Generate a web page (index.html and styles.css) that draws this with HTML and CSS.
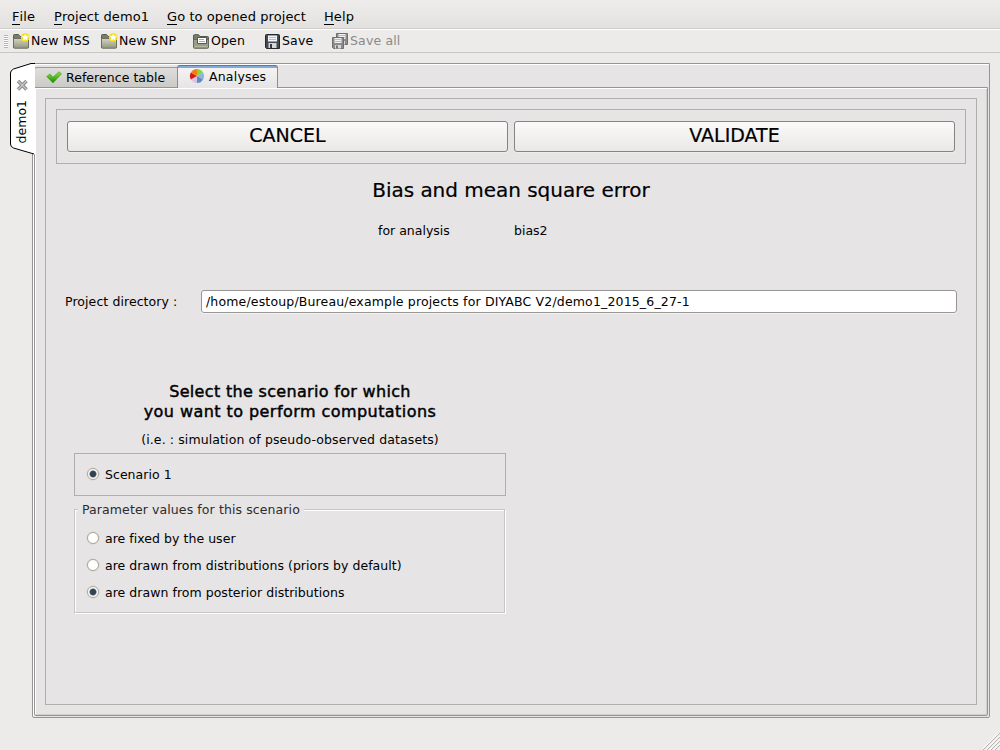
FILE: index.html
```html
<!DOCTYPE html>
<html lang="en">
<head>
<meta charset="utf-8">
<title>DIYABC</title>
<link rel="stylesheet" href="styles.css">
</head>
<body>
<svg class="defs" width="0" height="0">
  <defs>
    <linearGradient id="folder" x1="0" y1="0" x2="0" y2="1"><stop offset="0" stop-color="#d2d4bd"/><stop offset="1" stop-color="#94977f"/></linearGradient>
    <linearGradient id="check" x1="0" y1="0" x2="0" y2="1"><stop offset="0" stop-color="#8be33a"/><stop offset="1" stop-color="#178a08"/></linearGradient>
    <symbol id="new" viewBox="0 0 17 16">
      <path d="M.5 14.500V2.500q0-1 1-1h4l1.500 2h7.500q1 0 1 1v10z" fill="#7b7e69" stroke="#595b4c"/>
      <path d="M.5 5.500h15v9q0 .7-1 .7H1.500q-1 0-1-.7z" fill="url(#folder)" stroke="#6d705d"/>
      <circle cx="12.200" cy="4.300" r="4.300" fill="#f6e21c"/>
      <path d="M12.200.8l1.100 2.300 2.500.2-1.900 1.700.7 2.500-2.400-1.300-2.200 1.300.6-2.500-1.900-1.700 2.500-.2z" fill="#fff"/>
    </symbol>
    <symbol id="open" viewBox="0 0 17 16">
      <path d="M.5 13.500V2.500q0-.8 1-.8h4l1.500 1.800h7.500q1 0 1 1v9z" fill="#7a7d68" stroke="#55574a"/>
      <path d="M.5 6.500h15v8q0 .8-1 .8H1.500q-1 0-1-.8z" fill="#9c9f88" stroke="#666956"/>
      <path d="M4.500 4.500h9v6h-9z" fill="#fff" stroke="#555"/>
      <path d="M6 6.500h5M6 8.500h6" stroke="#aaa"/>
      <path d="M1.500 13.500h13" stroke="#b5b8a1"/>
    </symbol>
    <symbol id="floppy" viewBox="0 0 15 15">
      <path d="M.5 1.500q0-1 1-1h12q1 0 1 1v13H1.500l-1-1z" fill="#454951" stroke="#25282e"/>
      <path d="M3 1h9v6.500H3z" fill="#f3f8fc"/>
      <path d="M3 1.500h9" stroke="#75a8d2"/>
      <path d="M4 3.500h7M4 5.500h7" stroke="#a9bccb"/>
      <path d="M3.500 9h8v5h-8z" fill="#d5d7d9"/>
      <path d="M5 10h2v4H5z" fill="#343840"/>
    </symbol>
    <symbol id="floppy-off" viewBox="0 0 12 12">
      <path d="M.5.500h11v11H1.500l-1-1z" fill="#8b8b8b" stroke="#6f6f6f"/>
      <path d="M2.500 1h7v5h-7z" fill="#f1f1f1"/>
      <path d="M3 2.500h6M3 4.500h6" stroke="#bbb"/>
      <path d="M3 8h6v3.500H3z" fill="#d8d8d8"/>
      <path d="M4 8.500h2v3H4z" fill="#777"/>
    </symbol>
  </defs>
</svg>

<nav class="menubar">
  <span class="menu file"><u>F</u>ile</span>
  <span class="menu project"><u>P</u>roject demo1</span>
  <span class="menu goto"><u>G</u>o to opened project</span>
  <span class="menu help"><u>H</u>elp</span>
</nav>

<div class="toolbar">
  <i class="handle"></i>
  <span class="tool mss"><svg class="icon"><use href="#new"/></svg>New MSS</span>
  <span class="tool snp"><svg class="icon"><use href="#new"/></svg>New SNP</span>
  <span class="tool open"><svg class="icon"><use href="#open"/></svg>Open</span>
  <span class="tool save"><svg class="disk"><use href="#floppy"/></svg>Save</span>
  <span class="tool all"><svg class="disks" viewBox="0 0 17 16"><use href="#floppy-off" x="4" y="0" width="12" height="12"/><use href="#floppy-off" x="0" y="4" width="12" height="12"/></svg>Save all</span>
</div>

<main class="workspace">
  <div class="side-tab">
    <svg class="side-shape" viewBox="0 0 25 92">
      <path d="M25 .5H21L3.500 6Q.5 7.500.5 10V81Q.5 84 3.500 85L25 91.500z" fill="#fff"/>
      <path d="M25 .5H21L3.500 6Q.5 7.500.5 10V81Q.5 84 3.500 85L24 91" fill="none" stroke="#000"/>
      <path d="M8 18l8.500 8.500M16.500 18L8 26.500" stroke="#8a8a8a" stroke-width="3.400"/>
      <path d="M8 18l8.500 8.500M16.500 18L8 26.500" stroke="#c6c6c6" stroke-width="1.300"/>
    </svg>
    <span class="side-label">demo1</span>
  </div>

  <section class="project-pane">
    <div class="tabs">
      <div class="tab reference">
        <svg class="tick" viewBox="0 0 16 13"><path d="M.7 5.500L4 3l3 3.200L13 .8l2.500 2L7 12z" fill="url(#check)" stroke="#3d9b20" stroke-width=".6"/></svg>
        <span>Reference table</span>
      </div>
      <div class="tab active">
        <svg class="wheel" viewBox="0 0 16 16">
          <path d="M8 8L8 1A7 7 0 0 1 14.100 4.500z" fill="#86d63c"/>
          <path d="M8 8L14.100 4.500A7 7 0 0 1 14.100 11.500z" fill="#8fb5dc"/>
          <path d="M8 8L14.100 11.500A7 7 0 0 1 8 15z" fill="#5b8fc9"/>
          <path d="M8 8L8 15A7 7 0 0 1 1.900 11.500z" fill="#dcc3de"/>
          <path d="M8 8L1.900 11.500A7 7 0 0 1 1.900 4.500z" fill="#d51c1c"/>
          <path d="M8 8L1.900 4.500A7 7 0 0 1 8 1z" fill="#f57d0c"/>
        </svg>
        <span>Analyses</span>
      </div>
    </div>

    <div class="page">
      <div class="frame">
        <div class="actions">
          <button class="action">CANCEL</button>
          <button class="action">VALIDATE</button>
        </div>
        <h1 class="title">Bias and mean square error</h1>
        <div class="analysis"><span class="for">for analysis</span><span class="name">bias2</span></div>
        <label class="directory"><span class="dir-label">Project directory :</span><input class="path" value="/home/estoup/Bureau/example projects for DIYABC V2/demo1_2015_6_27-1"></label>

        <div class="scenario">
          <h2 class="heading"><span class="line1">Select the scenario for which</span><br><span class="line2">you want to perform computations</span></h2>
          <p class="hint">(i.e. : simulation of pseudo-observed datasets)</p>
          <div class="choices"><div class="option"><i class="radio on"></i><span>Scenario 1</span></div></div>
          <div class="group">
            <div class="legend">Parameter values for this scenario</div>
            <div class="option"><i class="radio"></i><span>are fixed by the user</span></div>
            <div class="option"><i class="radio"></i><span>are drawn from distributions (priors by default)</span></div>
            <div class="option"><i class="radio on"></i><span>are drawn from posterior distributions</span></div>
          </div>
        </div>
      </div>
    </div>
  </section>
</main>
<svg class="grip" viewBox="0 0 17 17"><path d="M0 17L17 0M4 17L17 4M8 17L17 8M12 17L17 12" stroke="#b4b3b2"/><path d="M-1.500 17L17-1.500M2.500 17L17 2.500M6.500 17L17 6.500M10.500 17L17 10.500" stroke="#fff"/></svg>
</body>
</html>
```

FILE: styles.css
```css
* { box-sizing: border-box; }
body { margin: 0; width: 1000px; height: 750px; overflow: hidden; display: flex; flex-direction: column; background: #ecebea; color: #000; font: 13px/16px "DejaVu Sans", sans-serif; }
.defs { position: absolute; }

.menubar { height: 30px; flex: none; display: flex; padding: 9px 0 0 12px; background: linear-gradient(#eeedec, #e2e1df); border-bottom: 1px solid #fff; box-shadow: inset 0 -1px #cdccca; letter-spacing: .08px; }
.menu { white-space: nowrap; }
.menu u { text-decoration: none; display: inline-block; height: 16px; border-bottom: 1px solid #000; }
.file { width: 42px; }
.project { width: 113px; }
.goto { width: 157px; }

.toolbar { height: 23px; flex: none; display: flex; padding-left: 4px; border-bottom: 1px solid #c8c7c5; }
.handle { width: 4px; height: 13px; margin: 5px 5px 0 0; background: repeating-linear-gradient(#b5b4b2 0 1px, #fff 1px 2px); }
.tool { display: flex; height: 22px; line-height: 22px; white-space: nowrap; font-size: 12.5px; letter-spacing: .15px; }
.icon { width: 17px; height: 16px; margin: 3px 1px 0 0; }
.disk { width: 15px; height: 15px; margin: 4px 2px 0 0; }
.disks { width: 17px; height: 16px; margin: 3px 1px 0 0; }
.mss { width: 88px; }
.snp { width: 92px; }
.open { width: 72px; }
.save { width: 67px; }
.all { color: #8b8a89; }

.workspace { flex: none; display: flex; padding: 10px 10px 0 10px; }
.side-tab { position: relative; z-index: 1; width: 24px; height: 92px; flex: none; margin-right: -2px; }
.side-shape { display: block; width: 25px; height: 92px; }
.side-label { position: absolute; left: 4px; bottom: 12px; writing-mode: vertical-rl; transform: rotate(180deg); font-size: 12.5px; line-height: 16px; }

.project-pane { width: 958px; height: 655px; border: 1px solid #969594; border-radius: 0 0 2px 2px; background: #e6e4e5; box-shadow: inset 1px 1px #fff; padding: 1px; display: flex; flex-direction: column; }
.tabs { height: 22px; flex: none; display: flex; }
.tab { display: flex; white-space: nowrap; font-size: 12.5px; letter-spacing: .05px; }
.reference { width: 144px; height: 20px; margin-top: 2px; padding: 2px 0 0 11px; border: 1px solid #9b9a99; border-bottom: 0; border-radius: 3px 0 0 0; background: linear-gradient(#dfdedc, #cbcac6); }
.tick { width: 16px; height: 13px; margin: 1px 4px 0 0; }
.active { position: relative; width: 101px; height: 23px; padding: 3px 0 0 11px; margin-left: -1px; border: 1px solid #8c8c8c; border-top: 1px solid #5479a6; border-bottom: 0; border-radius: 3px 3px 0 0; background: linear-gradient(#84abd8 0 2px, #f4f3f2 2px, #e6e4e5); letter-spacing: .2px; }
.wheel { width: 16px; height: 16px; margin: -1px 4px 0 0; }
.page { flex: 1; padding: 10px; border: 1px solid #969594; border-radius: 0 0 2px 2px; box-shadow: inset 1px 1px #fff, inset -1px -1px #d1cfcc; }
.frame { height: 607px; width: 932px; padding: 10px; border: 1px solid #b0aeaf; }

.actions { height: 55px; display: flex; gap: 6px; padding: 11px 10px; border: 1px solid #b0aeaf; }
.action { flex: 1; height: 31px; padding: 0 0 2px; border: 1px solid #858483; border-radius: 3px; background: linear-gradient(#fbfaf8, #e9e8e6); box-shadow: 0 1px #efeeed; font: 19px/27px "DejaVu Sans", sans-serif; color: #000; -webkit-text-stroke: .2px #000; }
.title { margin: 13px 0 0; font-size: 20px; line-height: 26px; font-weight: 400; text-align: center; letter-spacing: -.03px; -webkit-text-stroke: .2px #000; }
.analysis { display: flex; margin-top: 20px; padding-left: 322px; font-size: 12.5px; }
.for { width: 136px; }
.directory { display: flex; align-items: center; margin-top: 51px; padding-left: 9px; font-size: 12.5px; letter-spacing: .08px; }
.dir-label { width: 136px; }
.path { width: 756px; height: 23px; padding: 0 4px; border: 1px solid #989796; border-radius: 3px; background: #fff; box-shadow: 0 1px #f5f4f3; font: 12.5px "DejaVu Sans", sans-serif; letter-spacing: .16px; }

.scenario { width: 432px; margin: 69px 0 0 18px; }
.heading { margin: 0; font-size: 16px; line-height: 20px; font-weight: 400; -webkit-text-stroke: .45px #000; text-align: center; white-space: nowrap; }
.line1 { letter-spacing: .32px; }
.line2 { letter-spacing: .44px; }
.hint { margin: 10px 0 5px; font-size: 12.5px; letter-spacing: .11px; text-align: center; }
.choices { height: 43px; padding: 13px 0 0 12px; border: 1px solid #b0aeaf; }
.option { display: flex; height: 27px; line-height: 16px; font-size: 12.5px; letter-spacing: .04px; white-space: nowrap; }
.radio { width: 12px; height: 12px; margin: 1px 6px 0 0; border: 1px solid #ada69b; border-radius: 50%; background: #fff; box-shadow: 0 0 0 .5px #d4cec5; }
.on { background: radial-gradient(circle, #34424d 0 2.500px, #62717c 3.200px, #fff 4px); }
.group { width: 431px; height: 104px; margin-top: 13px; padding-left: 12px; border: 1px solid #c8c6c5; box-shadow: inset 1px 1px #fff, 1px 1px #fff; }
.legend { width: max-content; height: 16px; margin: -8px 0 13px -9px; padding: 0 4px; background: #e6e4e5; font-size: 12.5px; letter-spacing: .1px; color: #2c2c2c; }
.grip { position: absolute; right: 0; bottom: 0; width: 17px; height: 17px; }
```
